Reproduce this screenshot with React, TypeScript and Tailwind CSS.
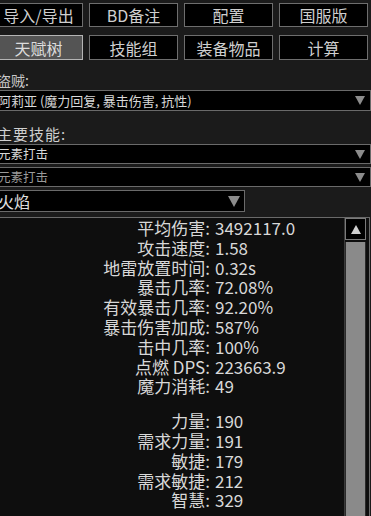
import type { ReactElement } from "react";

const topButtons = ["导入/导出", "BD备注", "配置", "国服版"];
const tabButtons = ["天赋树", "技能组", "装备物品", "计算"];

const stats: [string, string][] = [
  ["平均伤害", "3492117.0"],
  ["攻击速度", "1.58"],
  ["地雷放置时间", "0.32s"],
  ["暴击几率", "72.08%"],
  ["有效暴击几率", "92.20%"],
  ["暴击伤害加成", "587%"],
  ["击中几率", "100%"],
  ["点燃 DPS", "223663.9"],
  ["魔力消耗", "49"],
];

const attrs: [string, string][] = [
  ["力量", "190"],
  ["需求力量", "191"],
  ["敏捷", "179"],
  ["需求敏捷", "212"],
  ["智慧", "329"],
];

function Arrow({ className }: { className: string }): ReactElement {
  return (
    <svg className={className} viewBox="0 0 10 9">
      <path d="M0 0h10L5 9z" fill="#8c8c8c" />
    </svg>
  );
}

function Select({
  text,
  textClass,
  boxClass,
}: {
  text: string;
  textClass: string;
  boxClass: string;
}): ReactElement {
  return (
    <div
      className={`flex items-center justify-between border border-[#6a6a6a] bg-black -ml-[6px] pl-[3px] pr-[5px] ${boxClass}`}
    >
      <span className={`whitespace-nowrap ${textClass}`}>{text}</span>
      <Arrow className="w-[10px] h-[9px] shrink-0" />
    </div>
  );
}

function StatRow({ label, value }: { label: string; value: string }): ReactElement {
  return (
    <div className="flex h-[19.8px] items-center leading-[19.8px]">
      <div className="w-[209px] text-right whitespace-nowrap">{label}:</div>
      <div className="pl-[5px] whitespace-nowrap">{value}</div>
    </div>
  );
}

export default function App(): ReactElement {
  return (
    <div
      className="w-[371px] h-[516px] overflow-hidden bg-[#1b1b1b] text-[#d8d8d8]"
      style={{ fontFamily: '"Noto Sans CJK SC", "Noto Sans", sans-serif' }}
    >
      <div className="-ml-[6px] pt-[3px] flex gap-[6px]">
        {topButtons.map((b) => (
          <div
            key={b}
            className="w-[89px] h-[24px] shrink-0 border border-[#6e6e6e] bg-black flex items-center justify-center text-[16px] leading-none text-[#cfcfcf]"
          >
            {b}
          </div>
        ))}
      </div>
      <div className="-ml-[6px] mt-[8px] flex gap-[6px]">
        {tabButtons.map((b, i) => (
          <div
            key={b}
            className={`w-[89px] h-[25px] shrink-0 border flex items-center justify-center text-[16px] leading-none ${
              i === 0
                ? "border-[#b4b4b4] bg-[#545454] text-[#dcdcdc]"
                : "border-[#6e6e6e] bg-black text-[#cfcfcf]"
            }`}
          >
            {b}
          </div>
        ))}
      </div>

      <div className="-ml-[3px] mt-[10px] h-[20px] text-[14px] leading-[20px] text-[#c8c8c8]">盗贼:</div>
      <Select
        text="阿莉亚 (魔力回复, 暴击伤害, 抗性)"
        textClass="text-[13px] text-[#d8d8d8]"
        boxClass="h-[21px] w-[377px]"
      />

      <div className="-ml-[3px] mt-[13px] h-[20px] text-[15px] leading-[20px] tracking-[1px] text-[#d0d0d0]">
        主要技能:
      </div>
      <Select text="元素打击" textClass="text-[12.5px] text-[#d8d8d8]" boxClass="h-[20px] w-[377px]" />
      <Select text="元素打击" textClass="text-[12.5px] text-[#9a9a9a]" boxClass="mt-[3px] h-[20px] w-[377px]" />
      <div className="-ml-[6px] mt-[3px] h-[22px] w-[251px] flex items-center justify-between border border-[#6a6a6a] bg-black pl-[3px] pr-[4px]">
        <span className="text-[16px] text-[#e0e0e0]">火焰</span>
        <Arrow className="w-[12px] h-[11px]" />
      </div>

      <div className="mt-[5px] h-[320px] -ml-[6px] w-[376px] border border-[#6a6a6a] bg-[#0e0e0e] flex">
        <div className="flex-1 text-[17px] pl-[6px]">
          {stats.map(([l, v]) => (
            <StatRow key={l} label={l} value={v} />
          ))}
          <div className="h-[15px]" />
          {attrs.map(([l, v]) => (
            <StatRow key={l} label={l} value={v} />
          ))}
        </div>
        <div className="w-[22px] mr-[3px] flex flex-col border-l border-[#3a3a3a]">
          <div className="h-[22px] border border-[#7a7a7a] bg-black flex items-center justify-center">
            <svg className="w-[10px] h-[9px]" viewBox="0 0 10 9">
              <path d="M5 0l5 9H0z" fill="#d0d0d0" />
            </svg>
          </div>
          <div className="flex-1 mt-[2px] bg-[#8a8a8a] border-x border-[#2a2a2a]" />
        </div>
      </div>
    </div>
  );
}
